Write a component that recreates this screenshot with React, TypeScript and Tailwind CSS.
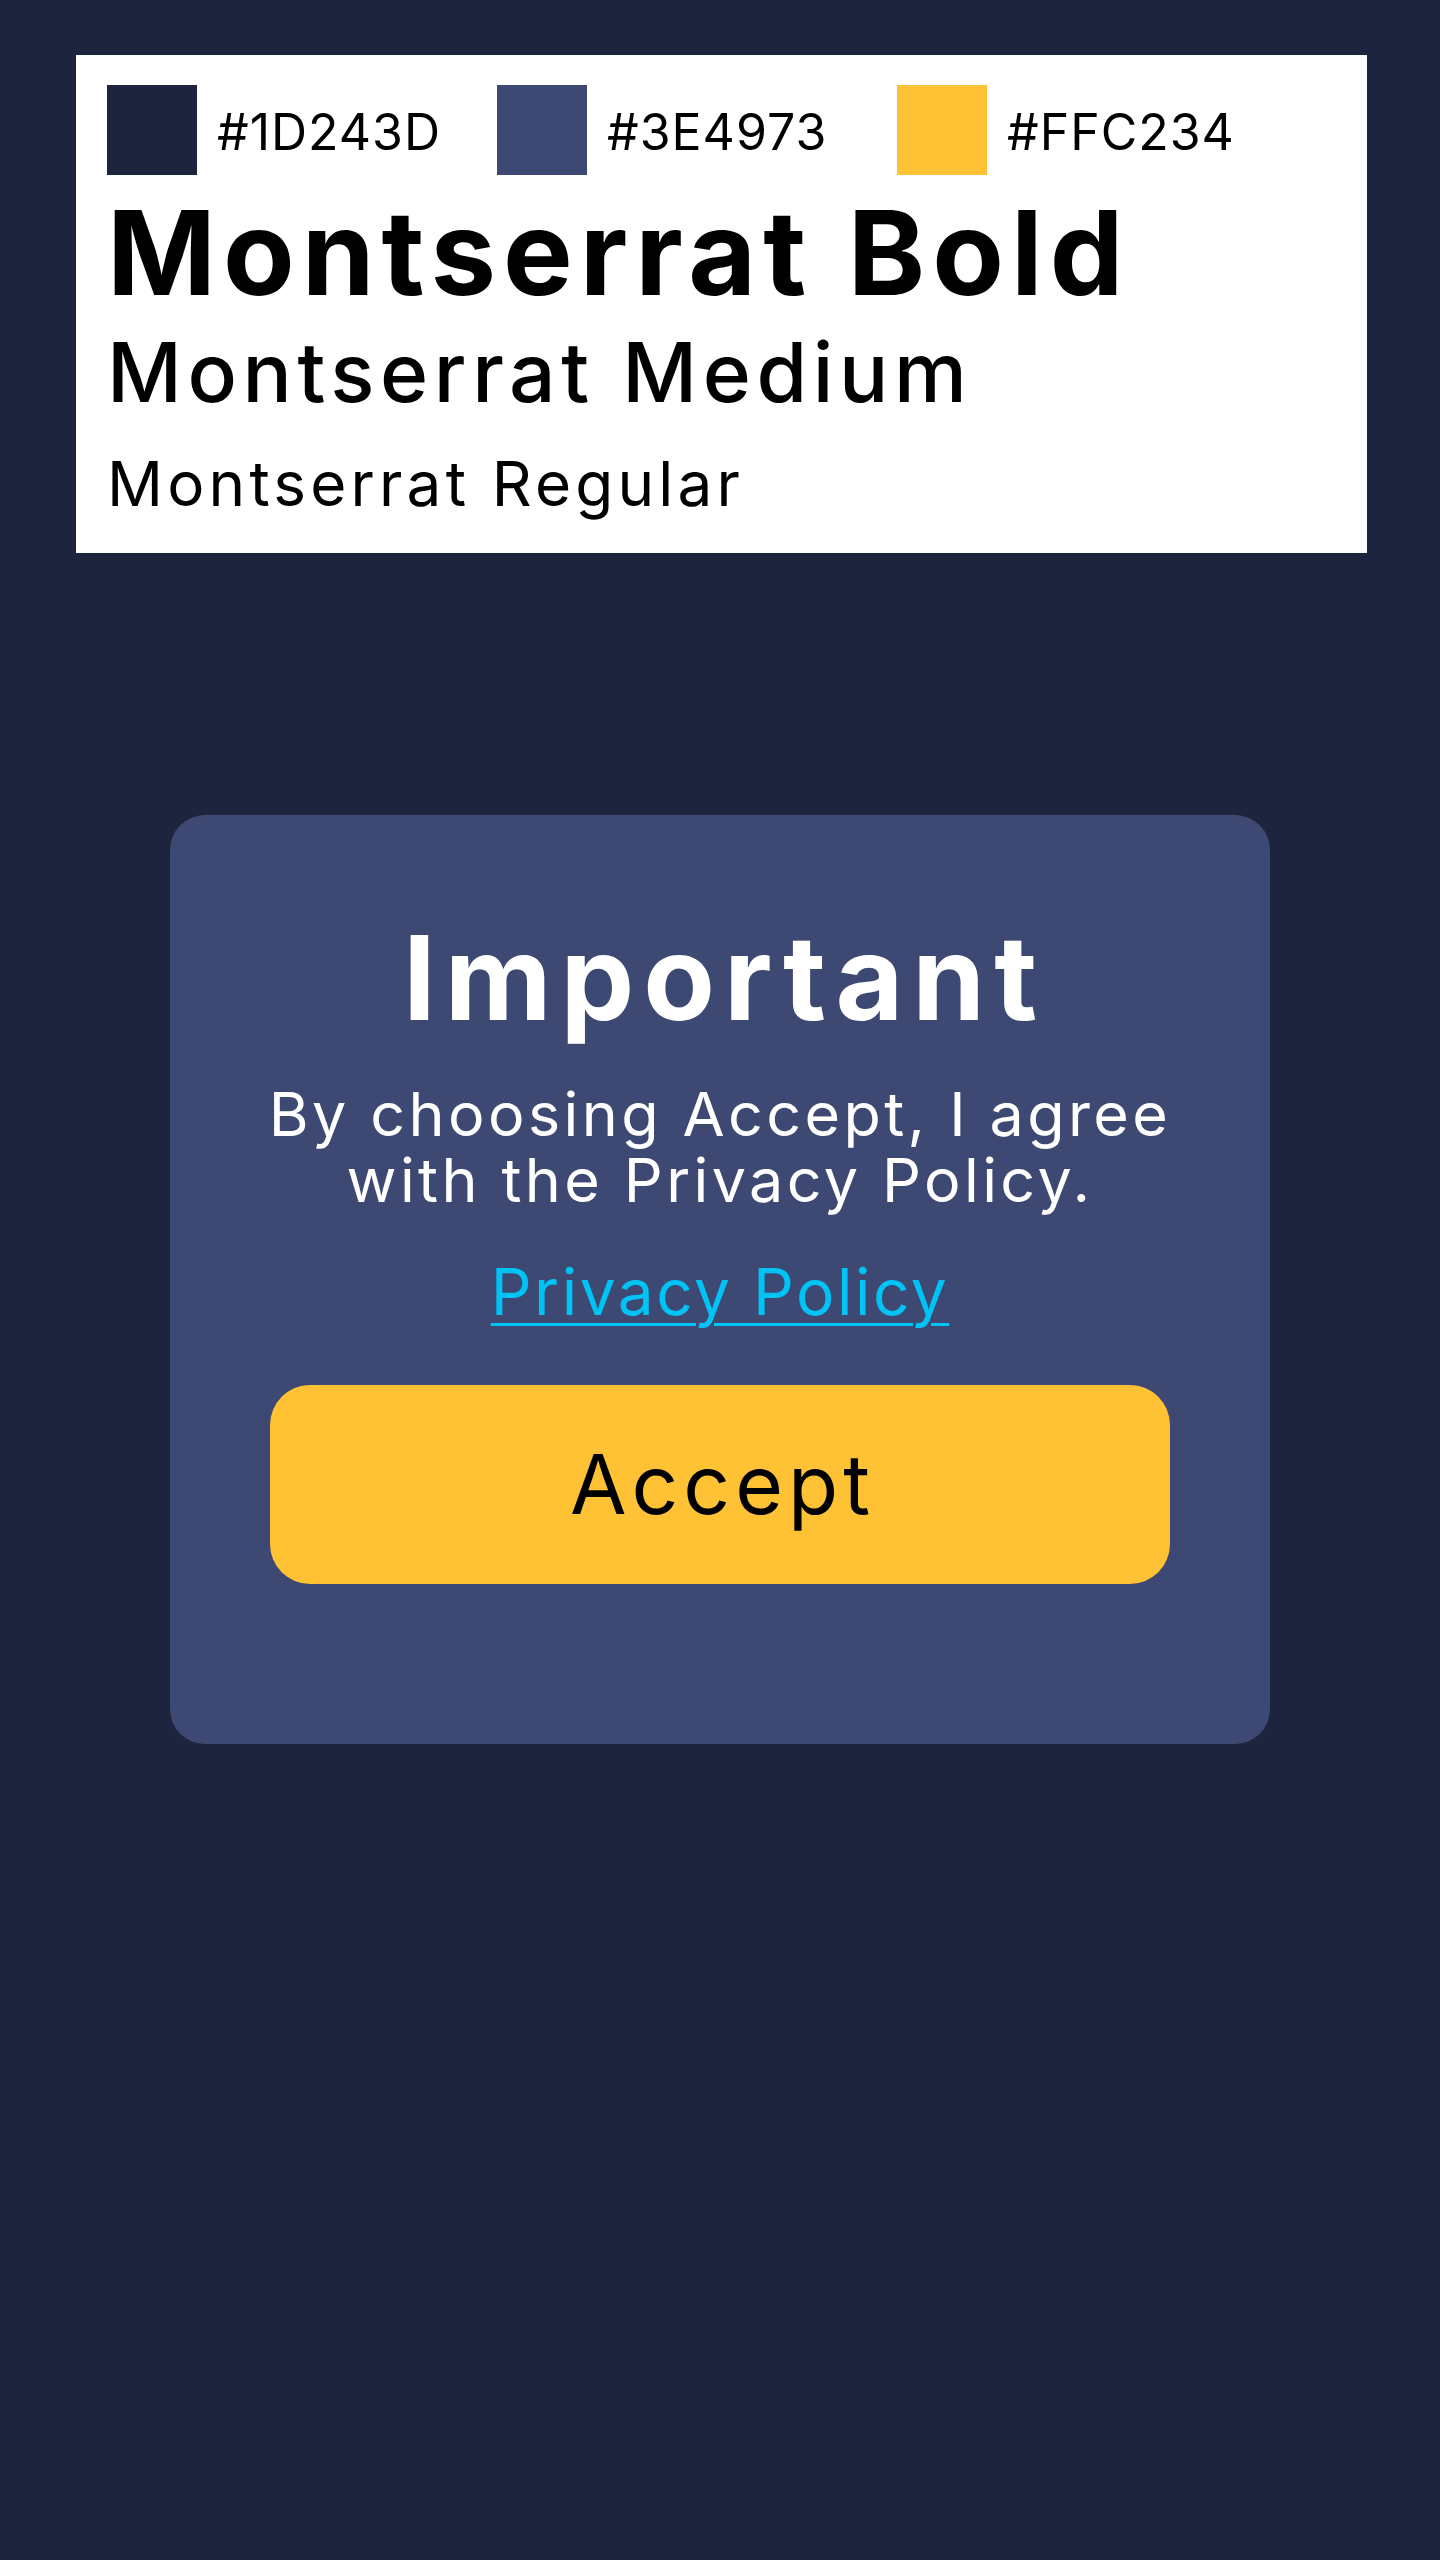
export default function App() {
  return (
    <div className="min-h-[2560px] bg-[#1D243D] pt-[55px] font-['Inter','Noto_Sans',sans-serif] text-black">
      <div className="ml-[76px] h-[498px] w-[1291px] bg-white pl-[31px] pt-[30px]">
        <div className="flex h-[90px] items-center">
          <div className="flex w-[390px] items-center gap-[20px]">
            <div className="h-[90px] w-[90px] bg-[#1D243D]" />
            <span className="pt-[4px] text-[50px] leading-none tracking-[1px] whitespace-nowrap">#1D243D</span>
          </div>
          <div className="flex w-[400px] items-center gap-[20px]">
            <div className="h-[90px] w-[90px] bg-[#3E4973]" />
            <span className="pt-[4px] text-[50px] leading-none tracking-[1px] whitespace-nowrap">#3E4973</span>
          </div>
          <div className="flex items-center gap-[20px]">
            <div className="h-[90px] w-[90px] bg-[#FFC234]" />
            <span className="pt-[4px] text-[50px] leading-none tracking-[1px] whitespace-nowrap">#FFC234</span>
          </div>
        </div>
        <div className="mt-[19px] h-[117px] text-[117px] font-bold leading-none tracking-[7px] whitespace-nowrap">
          Montserrat Bold
        </div>
        <div className="mt-[21px] h-[82px] text-[82px] font-medium leading-none tracking-[5.6px] whitespace-nowrap">
          Montserrat Medium
        </div>
        <div className="mt-[39px] h-[62px] text-[62px] font-normal leading-none tracking-[4.2px] whitespace-nowrap">
          Montserrat Regular
        </div>
      </div>

      <div className="mx-auto mt-[262px] flex w-[1100px] flex-col items-center rounded-[35px] bg-[#3E4973] px-[100px] pt-[104px] pb-[160px] text-center text-white">
        <h1 className="h-[117px] pl-[9px] text-[117px] font-bold leading-none tracking-[9px] whitespace-nowrap">Important</h1>
        <p className="mt-[45px] text-[61px] leading-[66px] tracking-[3.4px] whitespace-nowrap">
          By choosing Accept, I agree
          <br />
          with the Privacy Policy.
        </p>
        <a
          href="#"
          className="mt-[47px] h-[64px] text-[64px] leading-none tracking-[2.5px] whitespace-nowrap text-[#00C3F5] underline decoration-[3px] underline-offset-[8px]"
        >
          Privacy Policy
        </a>
        <button className="mt-[61px] flex h-[199px] w-[900px] items-center justify-center rounded-[40px] bg-[#FFC234] pl-[5px] text-[82px] leading-none tracking-[5px] text-black">
          Accept
        </button>
      </div>
    </div>
  );
}
